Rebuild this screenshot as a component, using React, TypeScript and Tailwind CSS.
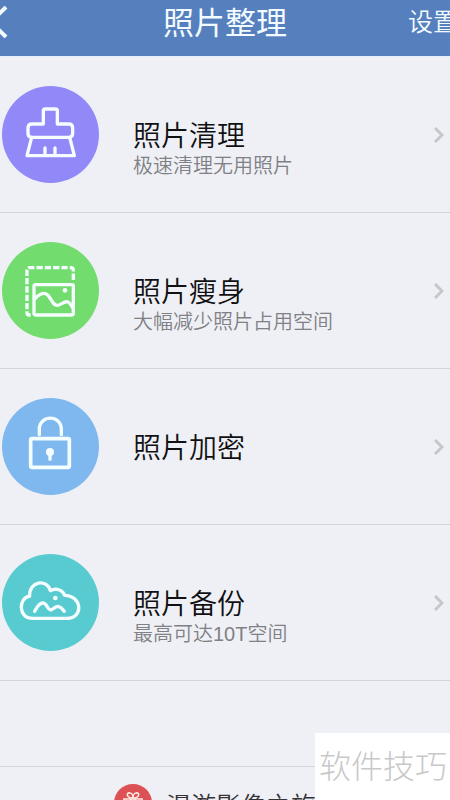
import type { ReactNode } from "react";

type Tool = {
  id: string;
  title: string;
  summary?: string;
  color: string;
  icon: ReactNode;
};

const TOOLS: Tool[] = [
  {
    id: "clean",
    title: "照片清理",
    summary: "极速清理无用照片",
    color: "bg-[#9189f8]",
    icon: (
      <>
        <path d="M130 132V93q0-6 6-6h30q6 0 6 6v39h34q12 0 12 12v16q0 12-12 12H96q-12 0-12-12v-16q0-12 12-12Z" />
        <path d="M94 176 81 227h142l-13-51M135 204v22M165 204v22" />
      </>
    ),
  },
  {
    id: "slim",
    title: "照片瘦身",
    summary: "大幅减少照片占用空间",
    color: "bg-[#73dc6e]",
    icon: (
      <>
        <path
          d="M92 237H88q-7 0-7-7V103q0-8 8-8h123q8 0 8 8v34"
          strokeWidth="10"
          strokeLinecap="butt"
          strokeDasharray="19 6"
        />
        <rect x="102" y="146" width="118" height="91" rx="5" />
        <path d="M103 190c12-14 28-24 40-13 12 12 16 34 31 31 12-3 20-14 30-10 7 3 10 10 15 18" />
        <circle cx="195" cy="163" r="7" fill="currentColor" stroke="none" />
      </>
    ),
  },
  {
    id: "lock",
    title: "照片加密",
    color: "bg-[#7fb8ef]",
    icon: (
      <>
        <path d="M118 128v-16c0-45 66-45 66 0v16" />
        <rect x="92" y="140" width="116" height="86" rx="4" strokeWidth="11" />
        <circle cx="150" cy="180" r="12" fill="currentColor" stroke="none" />
        <path d="M150 184v18" />
      </>
    ),
  },
  {
    id: "backup",
    title: "照片备份",
    summary: "最高可达10T空间",
    color: "bg-[#58cbd1]",
    icon: (
      <>
        <path d="M96 211c-41 0-42-61-7-67-2-46 53-52 62-16 17-9 37-3 43 14 55 2 55 69 8 69Z" />
        <path d="M104 190c7-14 15-25 25-25 12 0 15 24 25 20 9-4 14-12 22-9 8 2 12 8 17 14" />
        <circle cx="166" cy="150" r="7" fill="currentColor" stroke="none" />
      </>
    ),
  },
];

function Header() {
  return (
    <header className="grid h-[57px] grid-cols-[1fr_auto_1fr] items-center overflow-hidden border-b border-[#e3eefa] bg-[#567fbd] pb-3 text-[#f2fbff]">
      <button type="button" aria-label="返回" className="-ml-3 justify-self-start">
        <svg viewBox="0 0 20 32" className="h-8 w-5" fill="none" stroke="currentColor" strokeWidth="4">
          <path d="M18 1 3 16l15 15" />
        </svg>
      </button>
      <h1 className="pt-1 text-[31px] leading-9 font-normal">照片整理</h1>
      <button type="button" className="-mr-2 justify-self-end text-[25px] leading-8 font-[350] whitespace-nowrap">
        设置
      </button>
    </header>
  );
}

function ToolRow({ tool }: { tool: Tool }) {
  return (
    <li className="border-b border-[#d3d4da]">
      <a href={`#${tool.id}`} className="flex h-[155px] items-center pr-1.5 pl-0.5">
        <span className={`size-[97px] shrink-0 rounded-full ${tool.color}`}>
          <svg
            viewBox="6 18 291 291"
            className="size-full text-[#f4fdff]"
            fill="none"
            stroke="currentColor"
            strokeWidth="10"
            strokeLinecap="round"
            strokeLinejoin="round"
          >
            {tool.icon}
          </svg>
        </span>
        {/* only the title is centred on the icon, the summary hangs below it */}
        <span className="ml-[34px] flex h-7 min-w-0 flex-1 flex-col font-[350]">
          <span className="text-[28px] leading-8 text-[#111113]">{tool.title}</span>
          {tool.summary && (
            <span className="text-xl leading-[26px] text-[#808085]">{tool.summary}</span>
          )}
        </span>
        <svg viewBox="0 0 10 16" className="h-4 w-2.5 shrink-0 text-[#c6c7cb]" fill="none" stroke="currentColor" strokeWidth="3">
          <path d="m1 1 7 7-7 7" />
        </svg>
      </a>
    </li>
  );
}

function Promo() {
  return (
    <a
      href="#travel"
      className="mt-[85px] flex items-start gap-3.5 border-t border-[#d3d4da] pt-[17px] pl-[114px] text-[25px] leading-[44px] text-[#333336]"
    >
      <svg viewBox="0 0 38 38" className="size-[38px] shrink-0" fill="none" stroke="#fff0e8" strokeWidth="1.6">
        <circle cx="19" cy="19" r="19" fill="#dd5054" stroke="none" />
        <path d="M10 15h18v5H10zM12 20v10h14V20M17 15v15M21 15v15" />
        <path d="M19 14c-7 0-7-6-3-5 2 0 3 3 3 5Zm0 0c7 0 7-6 3-5-2 0-3 3-3 5Z" />
      </svg>
      <span className="font-[350] whitespace-nowrap">漫游影像之旅</span>
    </a>
  );
}

export default function App() {
  return (
    <div className="relative h-screen overflow-hidden bg-[#eff0f5] font-['Liberation_Sans','Noto_Sans_CJK_SC',sans-serif]">
      <Header />
      <main>
        <ul>
          {TOOLS.map((tool) => (
            <ToolRow key={tool.id} tool={tool} />
          ))}
        </ul>
        <Promo />
      </main>
      <div className="absolute right-0 bottom-0 bg-white pt-3.5 pr-[3px] pb-[13px] pl-1 text-[32px] leading-10 font-light text-[#c8c8c8]">
        软件技巧
      </div>
    </div>
  );
}
